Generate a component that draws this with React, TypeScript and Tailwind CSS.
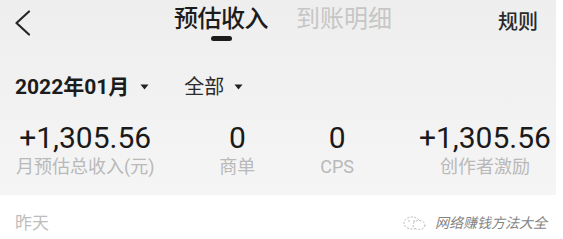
import React from "react";

const Caret = () => (
  <svg width="9" height="6" viewBox="0 0 9 6" className="block">
    <path d="M0.5 0.5 L8.5 0.5 L4.5 5.5 Z" fill="#222" />
  </svg>
);

const Stat = ({ value, label }: { value: string; label: string }) => (
  <div className="flex flex-col items-center">
    <div className="text-[30px] leading-[30px] text-[#1a1a1a]">{value}</div>
    <div className="mt-[5px] text-[18px] leading-[18px] text-[#b9b9b9]">{label}</div>
  </div>
);

export default function App() {
  return (
    <div
      className="w-[563px] h-[239px] bg-white overflow-hidden flex flex-col"
      style={{ fontFamily: 'Roboto, "Noto Sans CJK SC", sans-serif' }}
    >
      <div className="w-[556px] bg-linear-to-b from-[#eeeeee] to-[#f5f5f5] flex flex-col">
        {/* header */}
        <div className="h-[56px] flex items-start">
          <div className="ml-[14px] mt-[10px]">
            <svg width="17" height="26" viewBox="0 0 17 26" className="block">
              <polyline
                points="15,1.5 2.5,13 15,24.5"
                fill="none"
                stroke="#262626"
                strokeWidth="2.2"
                strokeLinecap="round"
                strokeLinejoin="round"
              />
            </svg>
          </div>
          <div className="ml-[143px] mt-[7px] flex flex-col items-center">
            <div className="text-[24px] leading-[24px] font-medium text-[#1c1c1c] tracking-[-0.5px]">预估收入</div>
            <div className="mt-[5px] w-[21px] h-[5px] rounded-full bg-[#1c1c1c]" />
          </div>
          <div className="ml-[28px] mt-[7px] text-[24px] leading-[24px] text-[#c6c6c6]">到账明细</div>
          <div className="ml-auto mr-[18px] mt-[12px] text-[20px] leading-[20px] font-medium text-[#2a2a2a]">规则</div>
        </div>

        {/* filters */}
        <div className="mt-[20px] flex items-center h-[22px] pl-[15px]">
          <span className="text-[21px] leading-[22px] font-bold text-[#1c1c1c]">2022年01月</span>
          <span className="ml-[11px]">
            <Caret />
          </span>
          <span className="ml-[35px] text-[20px] leading-[22px] text-[#2c2c2c]">全部</span>
          <span className="ml-[10px]">
            <Caret />
          </span>
        </div>

        {/* stats */}
        <div className="mt-[25px] pb-[19px] pl-[16px] pr-[5px] flex justify-between">
          <Stat value="+1,305.56" label="月预估总收入(元)" />
          <Stat value="0" label="商单" />
          <Stat value="0" label="CPS" />
          <Stat value="+1,305.56" label="创作者激励" />
        </div>
      </div>

      {/* white section */}
      <div className="flex items-center pt-[18px] pl-[15px] pr-[16px]">
        <span className="text-[17px] leading-[20px] text-[#bdbdbd]">昨天</span>
        <div className="ml-auto flex items-center">
          <svg width="25" height="15" viewBox="0 0 25 15" className="block">
            <ellipse cx="10" cy="7" rx="8" ry="6" fill="none" stroke="#b5b5b5" strokeWidth="1" strokeDasharray="2 1.5" />
            <ellipse cx="17" cy="9" rx="6" ry="4.5" fill="white" stroke="#b5b5b5" strokeWidth="1" strokeDasharray="2 1.5" />
            <circle cx="7" cy="5" r="0.8" fill="#b5b5b5" />
            <circle cx="12" cy="5" r="0.8" fill="#b5b5b5" />
          </svg>
          <span className="ml-[8px] text-[14px] leading-[16px] text-[#858585] italic">网络赚钱方法大全</span>
        </div>
      </div>
    </div>
  );
}
